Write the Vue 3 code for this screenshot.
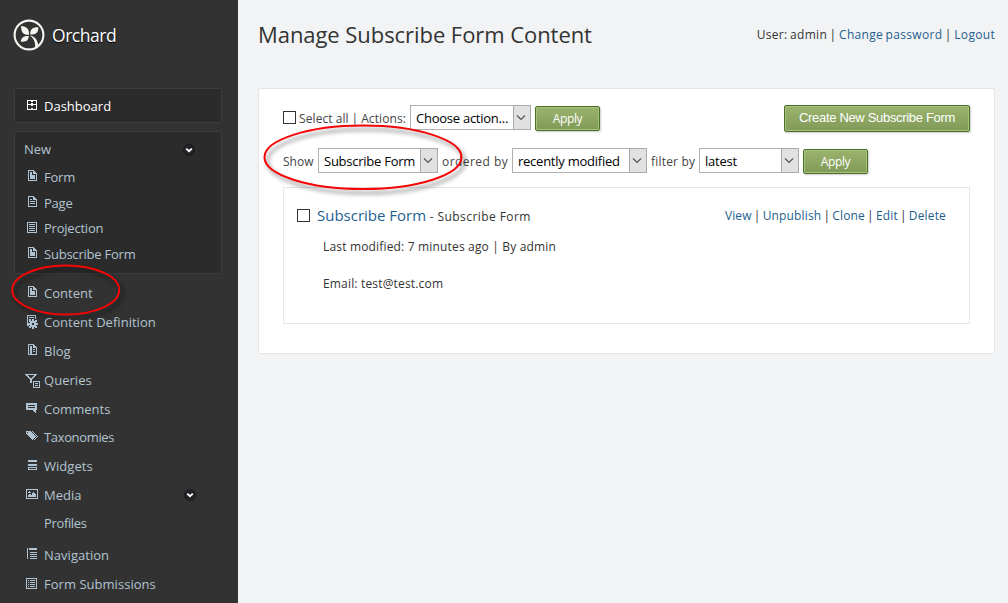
<script setup>
const doc = 'M4 1h6v1h1v1h1v1h1v8H4zM5 2v9h7V5H9V2zM6 3h2v3h3v4H6z'
const icons = {
  dashboard: 'M3 2h10v10H3zM4 3v3h3V5h2v1h3V3H9v1H7V3zM4 7v4h3v-1h2v1h3V7H9v1H7V7z',
  doc,
  page: 'M4 1h6v1h1v1h1v1h1v8H4zM5 2v9h7V5H9V2zM6 4h2v1H6zM6 6h5v1H6zM6 8h5v1H6z',
  list: 'M3 1h10v11H3zM4 2v9h8V2zM5 3h6v1H5zM5 5h6v1H5zM5 7h6v1H5zM5 9h6v1H5z',
  definition: 'M3 1h9v4h-1V2H4v9h1v1H3zM5 3h5v1H5zM5 5h2v1H5zM8 5h2v2h1V6h2v2h-1v1h2v2h-2v1h1v2h-2v-1h-1v2H8v-2H7v1H5v-2h1v-1H4V9h2V8H5V6h2v1h1zM8 9v2h2V9z',
  blog: 'M4 1h6v1h1v1h1v1h1v8H4zM5 2v9h1V3h2v8h4V5H9V2zM9 6h2v1H9zM9 8h2v1H9z',
  queries: 'M1 2h12v1h-1v1h-1v1h-1v1H9v1H8v4H6V7H5V6H4V5H3V4H2V3H1zM4 3v1h1v1h1v1h2V5h1V4h1V3zM9 9h7v7H9zM10 10v5h5v-5zM11 11h3v1h-3zM11 13h3v1h-3z',
  comments: 'M2 2h11v7h-1v3h-1v-1h-1v-1H9V9H2zM4 4v1h7V4zM4 6v1h7V6z',
  tags: 'M2 2h5v1h1v1h1v1h1v1h1v1h1v1h-1v1h-1v1H9v1H8v-1H7V9H6V8H5V7H4V6H3V5H2zM3 3v1h1V3zM8 2h1v1h1v1h1v1h1v1h1v1h1v1h-1v1h-1v1h-1v1h-1v-1h1V9h1V8h1V7h-1V6h-1V5h-1V4H9V3H8z',
  widgets: 'M4 2h9v2H4zM4 6h9v2H4zM4 9h9v3H4zM5 10v1h7v-1z',
  media: 'M2 2h12v10H2zM3 3v8h10V3zM4 10V8h1V7h2v1h1V6h1V5h1v1h1v1h1v3zM5 4h1v1h1v1H4V5h1z',
  navigation: 'M3 1h1v11H3zM5 1h8v2H5zM6 5h7v1H6zM6 7h7v1H6zM6 9h7v1H6zM6 11h7v1H6z',
  submissions: 'M2 2h11v11H2zM3 3v9h9V3zM4 4h1v1H4zM6 4h5v1H6zM4 6h1v1H4zM6 6h5v1H6zM4 8h1v1H4zM6 8h5v1H6zM4 10h1v1H4zM6 10h5v1H6z'
}
const newItems = [
  { icon: 'doc', label: 'Form' },
  { icon: 'page', label: 'Page' },
  { icon: 'list', label: 'Projection' },
  { icon: 'doc', label: 'Subscribe Form' }
]
const menu = [
  { icon: 'doc', label: 'Content' },
  { icon: 'definition', label: 'Content Definition' },
  { icon: 'blog', label: 'Blog' },
  { icon: 'queries', label: 'Queries' },
  { icon: 'comments', label: 'Comments' },
  { icon: 'tags', label: 'Taxonomies', tight: true },
  { icon: 'widgets', label: 'Widgets' },
  { icon: 'media', label: 'Media', toggle: true },
  { label: 'Profiles', child: true, tight: true },
  { icon: 'navigation', label: 'Navigation' },
  { icon: 'submissions', label: 'Form Submissions' }
]
</script>

<template>
  <div class="app">
    <aside class="side">
      <div class="brand">
        <svg class="logo" width="32" height="32" viewBox="0 0 32 32">
          <circle cx="16" cy="16" r="14.4" fill="none" stroke="#f4f5ee" stroke-width="2.1" />
          <g fill="#f4f5ee">
            <path d="M16 15.800C9.500 16 8 12.500 8.200 7C13.500 7.500 16.500 10 16 15.800z" />
            <path d="M17.300 15.500C16.800 10.500 19.500 8 25.300 8.200C25.500 13.500 23 15.500 17.300 15.500z" />
            <path d="M15.800 17C15.500 21.500 13 23.300 7.600 22.500C8.500 18 11.500 16.600 15.800 17z" />
            <path d="M16.500 16.200c4.500.800 8 4 8.800 9.800l-3.300 3c.800-5.500-1-9.500-5.500-12.800z" />
          </g>
        </svg>
        <span class="brand-name">Orchard</span>
      </div>
      <nav>
        <div class="box row dash">
          <svg class="icon" width="16" height="16"><path :d="icons.dashboard" fill-rule="evenodd" /></svg>
          <span>Dashboard</span>
        </div>
        <div class="box group">
          <div class="head">
            <span>New</span>
            <svg class="toggle" width="12" height="12"><circle cx="6" cy="6" r="5.500" /><path d="M3.200 4.600L6 7.300L8.800 4.600" /></svg>
          </div>
          <div v-for="item in newItems" :key="item.label" class="row sub">
            <svg class="icon" width="16" height="16"><path :d="icons[item.icon]" fill-rule="evenodd" /></svg>
            <span>{{ item.label }}</span>
          </div>
        </div>
        <div class="menu">
          <div v-for="item in menu" :key="item.label" class="row main-row" :class="{ child: item.child, tight: item.tight }">
            <svg class="icon" width="16" height="16"><path v-if="item.icon" :d="icons[item.icon]" fill-rule="evenodd" /></svg>
            <span>{{ item.label }}</span>
            <svg v-if="item.toggle" class="toggle" width="12" height="12"><circle cx="6" cy="6" r="5.500" /><path d="M3.200 4.600L6 7.300L8.800 4.600" /></svg>
          </div>
        </div>
      </nav>
    </aside>

    <main class="main">
      <header class="top">
        <h1>Manage Subscribe Form Content</h1>
        <div class="user">User: admin | <a>Change password</a> | <a>Logout</a></div>
      </header>
      <section class="panel">
        <div class="bar bar-actions">
          <i class="check"></i>
          <span class="label l-actions">Select all | Actions:</span>
          <div class="select s-action"><span>Choose action...</span><i><svg width="10" height="6"><path d="M1 .500L5 4.500L9 .500" /></svg></i></div>
          <button>Apply</button>
          <button class="create">Create New Subscribe Form</button>
        </div>
        <div class="bar bar-filter">
          <span class="label l-show">Show</span>
          <div class="select s-type"><span>Subscribe Form</span><i><svg width="10" height="6"><path d="M1 .500L5 4.500L9 .500" /></svg></i></div>
          <span class="label l-order">ordered by</span>
          <div class="select s-order"><span>recently modified</span><i><svg width="10" height="6"><path d="M1 .500L5 4.500L9 .500" /></svg></i></div>
          <span class="label l-filter">filter by</span>
          <div class="select s-filter"><span>latest</span><i><svg width="10" height="6"><path d="M1 .500L5 4.500L9 .500" /></svg></i></div>
          <button>Apply</button>
        </div>
        <article class="entry">
          <div class="entry-head">
            <i class="check"></i>
            <div class="entry-title"><a>Subscribe Form</a><span class="kind"> - Subscribe Form</span></div>
            <div class="links"><a>View</a> | <a>Unpublish</a> | <a>Clone</a> | <a>Edit</a> | <a>Delete</a></div>
          </div>
          <p class="meta">Last modified: 7 minutes ago | By admin</p>
          <p class="email">Email: test@test.com</p>
        </article>
      </section>
    </main>

    <svg class="marks" width="1008" height="603">
      <ellipse cx="65.700" cy="290" rx="53.500" ry="24.500" />
      <ellipse cx="363" cy="157.300" rx="98.500" ry="31.700" />
    </svg>
  </div>
</template>

<style>
body { background: #f2f3f5; overflow: hidden; }
</style>

<style scoped>
.app { position: relative; display: flex; width: 1008px; height: 603px; overflow: hidden; font-family: "Open Sans", "Noto Sans", sans-serif; font-size: 13px; color: #333; white-space: nowrap; }
.app * { box-sizing: border-box; }
.side { flex: none; width: 238px; background: #323232; color: #b2c4d0; }
.brand { display: flex; align-items: center; height: 70px; padding-left: 13px; }
.logo { flex: none; margin-top: -1px; }
.brand-name { margin-left: 7px; font-size: 17.500px; color: #fff; letter-spacing: -0.450px; text-shadow: 0 1px 1px #000; }
nav { padding-top: 18px; }
.box { width: 208px; margin-left: 14px; background: #2b2b2b; border: 1px solid #3c3c40; border-radius: 2px; }
.row { display: flex; align-items: center; }
.icon { flex: none; margin-right: 4px; fill: #afc3d2; shape-rendering: crispEdges; }
.dash { height: 35px; padding-left: 9px; color: #fff; }
.dash .icon { fill: #fff; }
.group { height: 143px; margin-top: 8px; }
.head { display: flex; align-items: center; justify-content: space-between; height: 32px; padding: 2px 26px 0 9px; }
.toggle { flex: none; }
.head .toggle { margin-top: 1px; }
.toggle circle { fill: #222226; stroke: #1d1d20; }
.toggle path { fill: none; stroke: #fff; stroke-width: 1.900; }
.sub { height: 25.700px; padding-left: 9px; letter-spacing: -0.220px; }
.sub .icon { margin-top: 1px; }
.menu { padding-top: 5px; }
.main-row { height: 28.800px; padding-left: 24px; letter-spacing: 0.030px; }
.main-row .toggle { margin: 0 42px 0 auto; }
.main-row.tight { letter-spacing: -0.350px; }
.child { height: 28px; margin-bottom: 3px; }
.main { flex: 1; padding: 0 13px 0 20px; }
.top { display: flex; align-items: center; justify-content: space-between; height: 68px; }
h1 { margin: 0; font-size: 22px; font-weight: 400; letter-spacing: -0.060px; }
.user { font-size: 12px; letter-spacing: 0.310px; word-spacing: -0.900px; }
a { color: #1e5f8e; }
.panel { height: 266px; margin-top: 20px; padding: 15px 24px 0; background: #fff; border: 1px solid #e4e5e6; border-radius: 2px; }
.bar { display: flex; align-items: center; height: 27px; }
.bar-filter { margin-top: 16px; }
.check { flex: none; width: 13px; height: 13px; border: 1px solid #333; background: #fff; }
.label { flex: none; padding-top: 2px; font-size: 12px; color: #444; }
.l-actions { width: 111px; margin-left: 3px; letter-spacing: 0.100px; word-spacing: -0.300px; }
.l-show { width: 35px; }
.l-order { width: 74px; padding-left: 4px; letter-spacing: 0.450px; }
.l-filter { width: 52px; padding-left: 4px; letter-spacing: 0.200px; }
.select { flex: none; display: flex; align-items: center; justify-content: space-between; height: 25px; padding-left: 5px; border: 1px solid #b0b0b0; background: #fff; color: #000; font-size: 13px; letter-spacing: -0.250px; }
.select i { display: flex; align-items: center; justify-content: center; width: 18px; height: 25px; margin: -1px; padding-right: 2px; border: 1px solid #aaa; background: #e1e1e1; }
.select path { fill: none; stroke: #555; stroke-width: 1.200; }
.s-action { width: 121px; }
.s-type { width: 120px; }
.s-order { width: 135px; }
.s-filter { width: 100px; }
button { flex: none; width: 65px; height: 25px; margin: 2px 0 0 4px; padding: 0 0 1px; border: 1px solid #487128; border-radius: 2px; background: linear-gradient(#9bb36c, #809a58); box-shadow: inset 0 0 0 1px #a9c080, 1px 1px 2px #ccc; color: #fff; font: 12px "Open Sans", sans-serif; letter-spacing: -0.350px; }
.create { width: 186px; height: 27px; margin: 2px 0 0 auto; padding-bottom: 2px; font-family: "Liberation Sans", sans-serif; font-size: 13px; letter-spacing: -0.320px; }
.entry { height: 137px; margin-top: 13px; padding: 13px 23px 0 13px; border: 1px solid #e6e6e6; }
.entry-head { display: flex; align-items: center; height: 28px; }
.entry-title { margin-left: 7px; font-size: 15px; }
.kind { font-size: 12px; letter-spacing: 0.430px; }
.links { margin-left: auto; font-size: 12px; letter-spacing: 0.150px; word-spacing: -1.150px; }
p { margin: 0 0 0 26px; font-size: 12px; line-height: 20px; letter-spacing: 0.170px; }
.meta { margin-top: 8px; }
.email { margin-top: 17px; }
.marks { position: absolute; inset: 0; pointer-events: none; filter: drop-shadow(3px 4px 2px rgba(0, 0, 0, .5)); }
.marks ellipse { fill: none; stroke: #f50505; stroke-width: 2; }
</style>
